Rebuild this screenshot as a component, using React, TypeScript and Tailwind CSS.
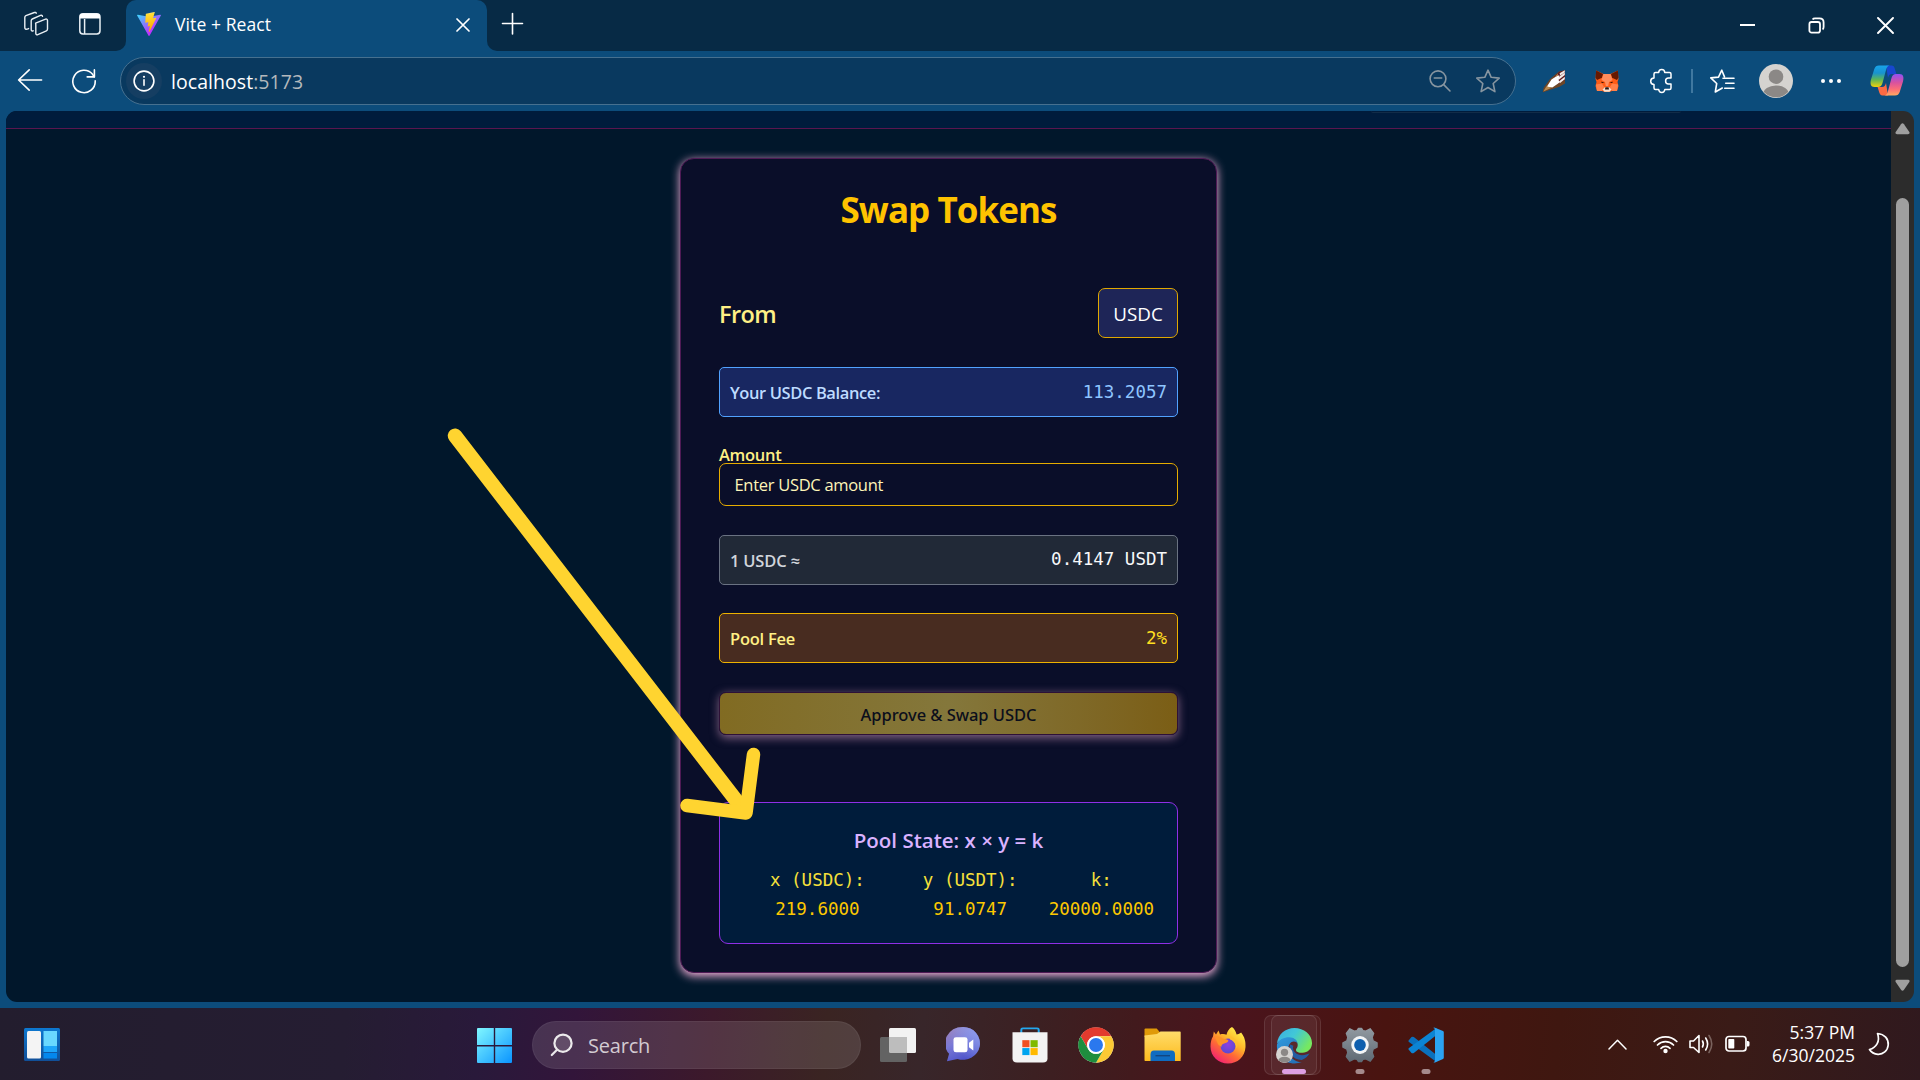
import type { ReactNode } from "react";

/* ---------- browser chrome icons ---------- */

function WorkspacesIcon() {
  return (
    <svg width="26" height="26" viewBox="0 0 26 26" fill="none" stroke="#e9eff4" strokeWidth="1.4" strokeLinejoin="round" strokeLinecap="round">
      <path d="M12.6 12.2 22.6 8.1a1.4 1.4 0 0 1 1.9 1.3v8.7c0 .8-.4 1.4-1.1 1.7l-8.6 3.900a1.4 1.4 0 0 1-2-1.300v-8.900c0-.6-.2-1.100-.2-1.300z" />
      <path d="M10.2 19.8c-1.6.7-2-.3-2-1.3V9.7c0-.8.4-1.4 1.1-1.7l8.2-3.6c1-.4 1.8 0 2 .9" />
      <path d="M5.6 17.6c-3 1.4-3.8.4-3.8-1V6.4c0-.8.4-1.400 1.100-1.700l8.500-3.200c1-.3 1.700 0 1.900.7" />
    </svg>
  );
}

function TabActionsIcon() {
  return (
    <svg width="24" height="24" viewBox="0 0 24 24" fill="none">
      <rect x="1.800" y="1.800" width="20.200" height="20.200" rx="3.200" stroke="#e9eff4" strokeWidth="1.500" />
      <path d="M1.800 6.500V4.500a2.700 2.700 0 0 1 2.700-2.700h14.800A2.700 2.700 0 0 1 22 4.500v2z" fill="#fff" />
      <path d="M6.600 7v15" stroke="#e9eff4" strokeWidth="1.500" />
    </svg>
  );
}

function ViteIcon() {
  return (
    <svg width="24" height="24" viewBox="0 0 256 257">
      <defs>
        <linearGradient id="viteA" x1="-.8%" x2="57.6%" y1="7.600%" y2="78.400%">
          <stop offset="0%" stopColor="#41D1FF" />
          <stop offset="100%" stopColor="#BD34FE" />
        </linearGradient>
        <linearGradient id="viteB" x1="43.400%" x2="50.300%" y1="2.200%" y2="89%">
          <stop offset="0%" stopColor="#FFEA83" />
          <stop offset="8.300%" stopColor="#FFDD35" />
          <stop offset="100%" stopColor="#FFA800" />
        </linearGradient>
      </defs>
      <path fill="url(#viteA)" d="M255.153 37.938L134.897 252.976c-2.483 4.440-8.862 4.466-11.382.048L.875 37.958c-2.746-4.814 1.371-10.646 6.827-9.670l120.385 21.517a6.537 6.537 0 0 0 2.322-.004l117.867-21.483c5.438-.991 9.574 4.796 6.877 9.620Z" />
      <path fill="url(#viteB)" d="M185.432.063L96.440 17.501a3.268 3.268 0 0 0-2.634 3.014l-5.474 92.456a3.268 3.268 0 0 0 3.997 3.378l24.777-5.718c2.318-.535 4.413 1.507 3.936 3.838l-7.361 36.047c-.495 2.426 1.782 4.500 4.151 3.780l15.304-4.649c2.372-.720 4.652 1.360 4.150 3.788l-11.698 56.621c-.732 3.542 3.979 5.473 5.943 2.437l1.313-2.028l72.516-144.720c1.215-2.423-.880-5.186-3.540-4.672l-25.505 4.922c-2.396.462-4.435-1.770-3.759-4.114l16.646-57.705c.677-2.350-1.370-4.583-3.769-4.113Z" />
    </svg>
  );
}

function CrossIcon({ size, stroke }: { size: number; stroke: number }) {
  return (
    <svg width={size} height={size} viewBox={`0 0 ${size} ${size}`} fill="none" stroke="#fff" strokeWidth={stroke} strokeLinecap="round">
      <path d={`M1 1 ${size - 1} ${size - 1}M${size - 1} 1 1 ${size - 1}`} />
    </svg>
  );
}

function BackIcon() {
  return (
    <svg width="26" height="24" viewBox="0 0 26 24" fill="none" stroke="#fff" strokeWidth="1.600" strokeLinecap="round" strokeLinejoin="round">
      <path d="M12.200 1.900 1.600 12l10.600 10.100M1.900 12H24.600" />
    </svg>
  );
}

function ReloadIcon() {
  return (
    <svg width="26" height="26" viewBox="0 0 26 26" fill="none" stroke="#fff" strokeWidth="1.600" strokeLinecap="round" strokeLinejoin="round">
      <path d="M24.200 12.900A11.200 11.200 0 1 1 21.600 6.300L23.200 8.900" />
      <path d="M23.400 1.900v7h-7.200" />
    </svg>
  );
}

function InfoIcon() {
  return (
    <svg width="24" height="24" viewBox="0 0 24 24" fill="none" stroke="#fff" strokeWidth="1.600">
      <circle cx="12" cy="12" r="9.900" />
      <path d="M12 10.700v5.600" strokeLinecap="round" />
      <circle cx="12" cy="7.800" r="1.100" fill="#fff" stroke="none" />
    </svg>
  );
}

function ZoomOutIcon() {
  return (
    <svg width="24" height="24" viewBox="0 0 24 24" fill="none" stroke="#8795a0" strokeWidth="1.600" strokeLinecap="round">
      <circle cx="10" cy="9.800" r="7.900" />
      <path d="M15.700 15.600 22 22M6.300 9h7.400" />
    </svg>
  );
}

function StarIcon() {
  return (
    <svg width="26" height="26" viewBox="0 0 26 26" fill="none" stroke="#8795a0" strokeWidth="1.600" strokeLinejoin="round">
      <path d="M13 2.200 16.200 9.300 24.200 10.100 18.200 15.500 19.900 23.600 13 19.500 6.100 23.600 7.800 15.500 1.800 10.100 9.800 9.300z" />
    </svg>
  );
}

function BrushIcon() {
  return (
    <svg width="24" height="24" viewBox="0 0 24 24">
      <path d="M23 1.200V14.600L17.500 17.800 5.500 21.800.8 23.200 1.500 19 8 10 17 2.600z" fill="#6e4627" />
      <path d="M23 1.200 17 2.900 12 8l4 7 7-4z" fill="#5f1a1f" />
      <path d="M17.600 4.200 22.800 1.300V3.300l-4.600 3.300zM15.800 8.700l7-5.200v2.400l-6.300 5zM16.800 12.600l6-4.900v2.600l-5 4z" fill="#f1ece9" />
      <path d="M15.500 6.500 9.500 10.500 4.800 17.800l5.500.8 7-4.900-.8-3.800 1-3.500z" fill="#fff" />
      <path d="m15.900 4.500-3.100 3.600 3.100-1.300zM4.500 17.300 1.300 22.600 9.700 18.800z" fill="#bb8b4f" />
    </svg>
  );
}

function FoxIcon() {
  return (
    <svg width="24" height="22" viewBox="0 0 24 22">
      <path d="M1.200.5 8.600 4h6.800L22.800.5l.7 8.500-1 3 1 4-1.500 5h-5l-2.500 1h-5L7 21H2L.5 16l1-4-1-3z" fill="#ff5c16" />
      <path d="M1.200.5 8 4 7 7.800 2 10 .5 7.500zM22.800.5 16 4l1 3.800 5 2.200 1.500-2.500z" fill="#661800" />
      <path d="M8.500 4h7l2 6-3.500 2-.8 4h-2.400l-.8-4-3.500-2z" fill="#ff8d5d" />
      <path d="M.9 14.500 7 13.500l2 3.500-2 4H2zM23.100 14.500 17 13.500 15 17l2 4h5z" fill="#ff8048" />
      <path d="M6.500 11.500 9.600 13H6.500zM17.500 11.500 14.400 13h3.100z" fill="#3a1206" />
      <path d="M7.500 19.500 10 17h4l2.500 2.500-2 2.300h-5z" fill="#f3e3d6" />
      <path d="M10.400 17.200h3.200l.4 2.300h-4z" fill="#2a1410" />
    </svg>
  );
}

function PuzzleIcon() {
  return (
    <svg width="26" height="26" viewBox="0 0 26 26" fill="none" stroke="#fff" strokeWidth="1.500" strokeLinejoin="round">
      <path d="M9.700 4.600C9.700 2.500 11 1.500 12.700 1.500S15.700 2.500 15.700 4.600H20.500Q22 4.600 22 6.100V10H19.500C17.500 10 16.600 11.200 16.600 13S17.500 16 19.500 16H22V20Q22 21.500 20.500 21.500H15.800C15.600 23.500 14.400 24.500 12.800 24.500S9.900 23.500 9.700 21.500H6.500Q5 21.500 5 20V16.500C3 16.400 1.700 15.200 1.700 13.200S3 10 5 9.900V6.100Q5 4.600 6.500 4.600z" />
    </svg>
  );
}

function FavoritesIcon() {
  return (
    <svg width="26" height="26" viewBox="0 0 26 26" fill="none" stroke="#fff" strokeWidth="1.600" strokeLinejoin="round" strokeLinecap="round">
      <path d="M15.500 8.900 12.800 2.200 9.500 9.100 1.800 9.900 7.700 15.500 6.300 24 13.300 20" />
      <path d="M14 10.200h11M16.700 15.200H25M15.700 20.200H25" />
    </svg>
  );
}

function AvatarIcon({ size }: { size: number }) {
  return (
    <svg width={size} height={size} viewBox="0 0 34 34">
      <defs>
        <clipPath id="avatarClip">
          <circle cx="17" cy="17" r="16.300" />
        </clipPath>
      </defs>
      <circle cx="17" cy="17" r="17" fill="#d5d3d0" />
      <g fill="#8b8886" clipPath="url(#avatarClip)">
        <circle cx="17" cy="12.700" r="7.300" />
        <ellipse cx="17" cy="30.600" rx="13" ry="9.200" />
      </g>
    </svg>
  );
}

function CopilotIcon() {
  return (
    <svg width="34" height="31" viewBox="0 0 34 31">
      <defs>
        <linearGradient id="cpA" x1="0" y1="0" x2="0" y2="1">
          <stop offset="0" stopColor="#18a4ea" />
          <stop offset=".35" stopColor="#1892cf" />
          <stop offset=".65" stopColor="#5cb559" />
          <stop offset="1" stopColor="#f2d20a" />
        </linearGradient>
        <linearGradient id="cpB" x1="0" y1="0" x2="0" y2="1">
          <stop offset="0" stopColor="#9050f4" />
          <stop offset=".4" stopColor="#d8529f" />
          <stop offset=".7" stopColor="#fb6c78" />
          <stop offset="1" stopColor="#ffaa62" />
        </linearGradient>
      </defs>
      <path d="M16 .5h5.500c2 0 2.700 1.200 3.300 3.200L26.400 9h-4.400c-2.500 0-3.200 1.500-4 4z" fill="#1747cf" />
      <path d="M18 30.500h-5.500c-2 0-2.700-1.200-3.300-3.200L7.600 22H12c2.500 0 3.200-1.500 4-4z" fill="#fb6a43" />
      <path d="M9 .5h10.500c-2 .5-2.800 2-3.500 4.500L12.500 18c-.8 2.700-2 4-4.500 4H4.500C.5 22 0 18.500 1 14.500L4.300 4C5.200 1.500 6.500.5 9 .5z" fill="url(#cpA)" />
      <path d="M25 30.500H14.500c2-.5 2.800-2 3.500-4.500L21.500 13c.8-2.700 2-4 4.500-4h3.500c4 0 4.500 3.500 3.500 7.500L29.700 27c-.9 2.500-2.200 3.500-4.700 3.500z" fill="url(#cpB)" />
    </svg>
  );
}

/* ---------- browser chrome ---------- */

function TabStrip() {
  return (
    <div className="flex h-[51px] bg-[#072a45] text-white">
      <div className="flex w-[126px] items-center gap-[29px] rounded-br-[10px] pl-[23px] pb-[3px]">
        <WorkspacesIcon />
        <TabActionsIcon />
      </div>
      <div className="relative flex h-[51px] w-[361px] items-center rounded-t-[10px] bg-[#0c4c7b] pb-[3px] pl-[11px] pr-[17px]">
        <div className="absolute -left-[10px] bottom-0 size-[10px] bg-[#0c4c7b]">
          <div className="size-full rounded-br-[10px] bg-[#072a45]" />
        </div>
        <div className="absolute -right-[10px] bottom-0 size-[10px] bg-[#0c4c7b]">
          <div className="size-full rounded-bl-[10px] bg-[#072a45]" />
        </div>
        <ViteIcon />
        <span className="ml-[14px] pb-px text-[17.5px] leading-6 tracking-[0.1px]">Vite + React</span>
        <div className="ml-auto mt-[2px]">
          <CrossIcon size={14} stroke={1.7} />
        </div>
      </div>
      <svg className="ml-[14px] mt-[12px]" width="23" height="23" viewBox="0 0 23 23" stroke="#fff" strokeWidth="1.600" strokeLinecap="round">
        <path d="M11.500 1.500v20.500M1.500 11.500h20" />
      </svg>
      <div className="ml-auto flex items-start pr-[26px] pt-[17px]">
        <div className="mr-[53px] mt-[7px] h-[2px] w-[15px] bg-white" />
        <svg className="mr-[52px]" width="17" height="17" viewBox="0 0 17 17" fill="none" stroke="#fff" strokeWidth="1.800">
          <rect x="1.400" y="5" width="10.600" height="10.600" rx="2.200" />
          <path d="M4.600 2.400Q5.300 1.400 7 1.400h4.500q4.100 0 4.100 4.100V10q0 1.700-1 2.400" />
        </svg>
        <CrossIcon size={17} stroke={1.9} />
      </div>
    </div>
  );
}

function Toolbar() {
  return (
    <div className="flex h-[60px] items-start bg-[#0c4c7b]">
      <div className="ml-[17px] mt-[17px]">
        <BackIcon />
      </div>
      <div className="ml-[28px] mt-[17px]">
        <ReloadIcon />
      </div>
      <div className="ml-[23px] mt-[6px] flex h-[48px] w-[1396px] items-center rounded-full border border-[#46708f] bg-[#09395f] pl-[5px] pr-[14px]">
        <div className="flex size-[36px] items-center justify-center rounded-full bg-[#153e62]">
          <InfoIcon />
        </div>
        <span className="ml-[9px] pt-px text-[19.500px] leading-6 tracking-[0.05px] text-white">
          localhost<span className="text-[#b3b8bc]">:5173</span>
        </span>
        <div className="ml-auto mr-[23px]">
          <ZoomOutIcon />
        </div>
        <StarIcon />
      </div>
      <div className="ml-[26px] mt-[18px]">
        <BrushIcon />
      </div>
      <div className="ml-[29px] mt-[19px]">
        <FoxIcon />
      </div>
      <div className="ml-[30px] mt-[17px]">
        <PuzzleIcon />
      </div>
      <div className="ml-[16px] mt-[18px] h-[24px] w-[2px] bg-[#4078a0]" />
      <div className="ml-[16px] mt-[17px]">
        <FavoritesIcon />
      </div>
      <div className="ml-[24px] mt-[13px]">
        <AvatarIcon size={34} />
      </div>
      <div className="ml-[28px] mt-[28px] flex gap-[4px]">
        <i className="size-[4px] rounded-full bg-white" />
        <i className="size-[4px] rounded-full bg-white" />
        <i className="size-[4px] rounded-full bg-white" />
      </div>
      <div className="ml-[29px] mt-[14px]">
        <CopilotIcon />
      </div>
    </div>
  );
}

function Scrollbar() {
  return (
    <div className="flex w-[23px] flex-col items-center bg-[#2c2c2c]">
      <svg className="mt-[12px]" width="15" height="12" viewBox="0 0 15 12">
        <path d="M6 1.200Q7.500-.6 9 1.200L14.300 9q.9 2.200-1.300 2.200H2Q-.2 11.200.7 9z" fill="#9f9f9f" />
      </svg>
      <div className="mt-[63px] w-[13px] flex-1 rounded-full bg-[#9f9f9f]" />
      <svg className="mb-[11px] mt-[12px]" width="15" height="12" viewBox="0 0 15 12">
        <path d="M6 10.800Q7.500 12.600 9 10.800L14.300 3q.9-2.200-1.300-2.200H2Q-.2.800.7 3z" fill="#9f9f9f" />
      </svg>
    </div>
  );
}

/* ---------- swap page ---------- */

function InfoRow({ label, value, box, labelClass, valueClass }: { label: string; value: string; box: string; labelClass: string; valueClass: string }) {
  return (
    <div className={`flex h-[50px] items-center justify-between rounded-[5px] border px-[10px] ${box}`}>
      <span className={`pt-[2px] text-[16.500px] font-semibold ${labelClass}`}>{label}</span>
      <span className={`font-['DejaVu_Sans_Mono',monospace] text-[17.500px] ${valueClass}`}>{value}</span>
    </div>
  );
}

function PoolColumn({ label, value }: { label: string; value: string }) {
  return (
    <div className="text-center leading-[29px]">
      <div className="text-[#f6e03a]">{label}</div>
      <div className="text-[#fcc800]">{value}</div>
    </div>
  );
}

function PoolState() {
  return (
    <div className="mt-[67px] h-[142px] rounded-[9px] border border-[#8f2fe6] bg-[#001c3b] pt-[24px]">
      <h3 className="text-center text-[20.500px] font-semibold leading-[26px] text-[#dab2ff]">Pool State: x × y = k</h3>
      <div className="ml-[50px] mt-[13px] flex font-['DejaVu_Sans_Mono',monospace] text-[17.500px]">
        <PoolColumn label="x (USDC):" value="219.6000" />
        <div className="w-[58px]" />
        <PoolColumn label="y (USDT):" value="91.0747" />
        <div className="w-[31px]" />
        <PoolColumn label="k:" value="20000.0000" />
      </div>
    </div>
  );
}

function SwapCard() {
  return (
    <div className="flex h-[815px] w-[537px] flex-col rounded-[14px] border border-[#4e1a55] bg-[#0a0e29] px-[38px] pt-[29px] shadow-[0_2.400px_9.600px_0_rgba(252,182,222,0.98)]">
      <h1 className="text-center text-[35px] font-bold leading-[43px] tracking-[-0.95px] text-[#ffc300]">Swap Tokens</h1>
      <div className="mt-[57px] flex items-center justify-between">
        <span className="pt-[3px] text-[23.500px] font-semibold tracking-[-0.6px] text-[#fff085]">From</span>
        <div className="flex h-[50px] w-[80px] items-center justify-center rounded-[7px] border border-[#e0a800] bg-[#1e2557] pt-[2px] text-[18.800px] text-white">USDC</div>
      </div>
      <div className="mt-[29px] flex flex-col">
        <InfoRow label="Your USDC Balance:" value="113.2057" box="border-[#51a2ff] bg-[#182761]" labelClass="text-[#bedbff] tracking-[-0.4px]" valueClass="text-[#8ec5ff] pt-px" />
        <label className="mt-[29px] h-[17px] text-[16.500px] font-semibold leading-[17px] tracking-[-0.3px] text-[#fff085]">Amount</label>
        <div className="mb-[29px] flex h-[43px] items-center rounded-[7px] border border-[#e6ac00] px-[14.500px] pt-[2px] text-[16.500px] tracking-[-0.3px] text-[#fef5b8]">Enter USDC amount</div>
        <InfoRow label="1 USDC ≈" value="0.4147 USDT" box="border-[#6a7282] bg-[#212937]" labelClass="text-[#d1d5dc] tracking-[-0.2px]" valueClass="text-[#f7f8fa] pb-px" />
        <div className="h-[28px]" />
        <InfoRow label="Pool Fee" value="2%" box="border-[#edb200] bg-[#482c20]" labelClass="text-[#fff085] tracking-[-0.25px]" valueClass="text-[#ffdf20]" />
      </div>
      <button className="mt-[29px] flex h-[43px] items-center justify-center rounded-[7px] border border-[#2e1137] bg-linear-to-r from-[#816b22] via-[#84773b] to-[#7b5e15] pt-[2px] font-['Noto_Sans',sans-serif] text-[16.500px] font-medium leading-6 tracking-[-0.05px] text-[#0b0e1c] shadow-[0_2.400px_9.600px_0_rgba(252,182,222,0.5)]">
        Approve &amp; Swap USDC
      </button>
      <PoolState />
    </div>
  );
}

function Page() {
  return (
    <div className="relative flex flex-1 flex-col items-center bg-[#01172b]">
      <div className="h-[18px] w-full border-b border-[#5a164f] bg-[#001c3c]" />
      <div className="absolute right-[210px] top-0 h-[2px] w-[310px] rounded-b-full border-b border-[#122c48]" />
      <div className="mt-[29px]">
        <SwapCard />
      </div>
    </div>
  );
}

/* Hand-drawn pointer laid over the page */
function PointerArrow() {
  return (
    <svg className="pointer-events-none absolute left-[440px] top-[420px]" width="340" height="410" viewBox="440 420 340 410" fill="none" stroke="#ffd430" strokeLinecap="round" strokeLinejoin="round">
      <path d="M455 435.700 742 808" strokeWidth="14.500" />
      <path d="M753.500 754.500 746 813 687 805.500" strokeWidth="13.500" />
    </svg>
  );
}

/* ---------- taskbar ---------- */

function WidgetsIcon() {
  return (
    <svg width="36" height="34" viewBox="0 0 36 34">
      <defs>
        <linearGradient id="wgA" x1="0" y1="0" x2="0" y2="1">
          <stop offset="0" stopColor="#0d78d0" />
          <stop offset="1" stopColor="#114f98" />
        </linearGradient>
      </defs>
      <rect width="36" height="33" rx="1.500" fill="url(#wgA)" />
      <rect x="3" y="3" width="14" height="27.500" rx="1.500" fill="#f4f4f4" />
      <rect x="19.500" y="3" width="13.500" height="15" fill="#69d8ff" />
      <rect x="19.500" y="18" width="13.500" height="6" fill="#1ea5fa" />
      <rect x="19.500" y="25" width="13.500" height="5.500" fill="#0487ee" />
    </svg>
  );
}

function StartIcon() {
  return (
    <svg width="35" height="35" viewBox="0 0 35 35">
      <defs>
        <linearGradient id="stA" x1="0" y1="0" x2="35" y2="35" gradientUnits="userSpaceOnUse">
          <stop offset="0" stopColor="#80f7ff" />
          <stop offset="1" stopColor="#0a94ff" />
        </linearGradient>
      </defs>
      <path fill="url(#stA)" d="M1 0h15.800v17H0V1a1 1 0 0 1 1-1zM18.200 0H34a1 1 0 0 1 1 1v16H18.200zM0 18.400h16.800V35H1a1 1 0 0 1-1-1zM18.200 18.400H35V34a1 1 0 0 1-1 1H18.200z" />
    </svg>
  );
}

function TaskViewIcon() {
  return (
    <svg width="36" height="35" viewBox="0 0 36 35">
      <rect x="9" y="0" width="27" height="25" rx="1.500" fill="#f2f2f2" />
      <rect x="0" y="9" width="27" height="25" rx="1.500" fill="#636363" />
      <path d="M9 9h18v16H10.500Q9 25 9 23.500z" fill="#bdbdbd" />
    </svg>
  );
}

function ChatIcon() {
  return (
    <svg width="36" height="36" viewBox="0 0 36 40" preserveAspectRatio="none">
      <defs>
        <linearGradient id="chA" x1=".1" y1="0" x2=".6" y2="1">
          <stop offset="0" stopColor="#a07cae" />
          <stop offset=".45" stopColor="#7b7ad6" />
          <stop offset="1" stopColor="#4a50c8" />
        </linearGradient>
        <linearGradient id="chB" x1="1" y1="0" x2=".3" y2=".6">
          <stop offset="0" stopColor="#8fa0f0" />
          <stop offset="1" stopColor="#8fa0f0" stopOpacity="0" />
        </linearGradient>
      </defs>
      <path d="M18 0a17.500 19 0 1 1-6 36.900L1 39.500 3.200 31A19 19 0 0 1 18 0z" fill="url(#chA)" transform="scale(.96)" />
      <path d="M18 0a17.500 19 0 1 1-6 36.900L1 39.500 3.200 31A19 19 0 0 1 18 0z" fill="url(#chB)" transform="scale(.96)" />
      <rect x="7.500" y="11.500" width="14" height="16.500" rx="2.500" fill="#fff" />
      <path d="M23 17.500 27.300 14v12L23 22.500z" fill="#fff" />
    </svg>
  );
}

function StoreIcon() {
  return (
    <svg width="36" height="36" viewBox="0 0 36 41" preserveAspectRatio="none">
      <path d="M9.300 8V3.200q0-1.500 1.500-1.500h14.400q1.500 0 1.500 1.500V8" fill="none" stroke="#23a8ee" strokeWidth="2" />
      <path d="M.5 6h35v30q0 4.500-4.500 4.500H5Q.5 40.500.5 36z" fill="#f3f3f3" />
      <path d="M10.300 15h7.200v8h-7.200z" fill="#f25022" />
      <path d="M18.500 15h7.200v8h-7.200z" fill="#7fba00" />
      <path d="M10.300 24h7.200v8h-7.200z" fill="#00a4ef" />
      <path d="M18.500 24h7.200v8h-7.200z" fill="#ffb900" />
    </svg>
  );
}

function ChromeIcon() {
  return (
    <svg width="36" height="36" viewBox="0 0 48 48">
      <circle cx="24" cy="24" r="23.500" fill="#fff" />
      <path d="M3.600 12.200A23.500 23.500 0 0 1 44.400 12.200H24A11.800 11.800 0 0 0 13.800 29.900z" fill="#e33b2e" />
      <path d="M44.400 12.200A23.500 23.500 0 0 1 24 47.500L34.200 29.900A11.800 11.800 0 0 0 24 12.200z" fill="#fcc934" />
      <path d="M24 47.500A23.500 23.500 0 0 1 3.600 12.200L13.800 29.900A11.800 11.800 0 0 0 34.200 29.900z" fill="#1e8e3e" />
      <circle cx="24" cy="24" r="11.800" fill="#fff" />
      <circle cx="24" cy="24" r="9.300" fill="#2a78ee" />
    </svg>
  );
}

function ExplorerIcon() {
  return (
    <svg width="37" height="34" viewBox="0 0 37 34">
      <defs>
        <linearGradient id="exA" x1="0" y1="0" x2="0" y2="1">
          <stop offset="0" stopColor="#ffdc6a" />
          <stop offset="1" stopColor="#fdbb1e" />
        </linearGradient>
      </defs>
      <path d="M1.500.5h11.200l3 3.500v5H.5V1.500q0-1 1-1z" fill="#e09a08" />
      <path d="M.5 7.500 13 6 16.500 3.500h19.500q.7 0 .7.700V33H1.200Q.5 33 .5 32.300z" fill="url(#exA)" />
      <path d="M6.500 33v-6.500q0-4 3.500-4h17.500q3.500 0 3.500 4V33z" fill="#0f6cc0" />
      <rect x="11.500" y="27" width="14.500" height="1.400" fill="#12467f" />
    </svg>
  );
}

function FirefoxIcon() {
  return (
    <svg width="36" height="37" viewBox="0 0 36 37">
      <defs>
        <linearGradient id="ffA" x1=".85" y1=".05" x2=".2" y2="1">
          <stop offset="0" stopColor="#fff44f" />
          <stop offset=".35" stopColor="#ffb92a" />
          <stop offset=".62" stopColor="#ff6a35" />
          <stop offset="1" stopColor="#f0187a" />
        </linearGradient>
        <radialGradient id="ffB" cx=".5" cy=".4" r=".6">
          <stop offset="0" stopColor="#8f3fe0" />
          <stop offset="1" stopColor="#5b4ad0" />
        </radialGradient>
      </defs>
      <path d="M22 0c2.500 2 4 4.600 4.600 7.500 3-.4 4.500-2 4.500-2 3.600 4.500 4.700 9 4.400 14.500C35 30 27.500 36.500 18 36.500S.500 29.500.500 19.500c0-4 1-8 2.500-10l.8-5L6 7.500 8.500 3.500 10 7.500c2.500-.8 5-.5 6.500.3.800-3.500 2.500-6.300 5.500-7.800z" fill="url(#ffA)" />
      <circle cx="18" cy="19" r="7.500" fill="url(#ffB)" />
      <path d="M5 10c3.500-1.500 6.500.2 8 1.800 2 .2 4.500.5 5.500 2-.8 1.800-3.300 2.300-5 3-1.400.6-2.200 1.500-2 3-1.500-.5-3.500-2.500-3.500-2.500z" fill="#ff9328" />
      <path d="M20 9.500c4 .5 7.500 4 7.500 8.500 0 1.500-.3 2.600-1 3.600-.3-4.500-3-7.600-6.500-9z" fill="#ffc02f" />
    </svg>
  );
}

function EdgeIcon() {
  return (
    <svg width="37" height="37" viewBox="0 0 38 38">
      <defs>
        <linearGradient id="egA" x1="0" y1="0" x2="1" y2=".5">
          <stop offset="0" stopColor="#2aa4e0" />
          <stop offset=".5" stopColor="#2fc3d4" />
          <stop offset="1" stopColor="#6ae652" />
        </linearGradient>
        <linearGradient id="egB" x1="0" y1="0" x2=".6" y2="1">
          <stop offset="0" stopColor="#1c92dc" />
          <stop offset="1" stopColor="#1166b4" />
        </linearGradient>
      </defs>
      <path d="M1 17C2 7.500 9.500 1 19 1s18 6.500 18 15.500c0 6-4.500 10-9.800 10-4 0-6.700-1.300-6.700-3 0-1.300 1.800-2 1.800-5.300 0-3.700-3.400-7-8.300-7C8.500 11.200 3.500 13.500 1 17z" fill="url(#egA)" />
      <path d="M1 18c2-5 7-7.500 12.500-7.500 5 0 8.700 3.200 8.700 7.300 0-1.500-1.800-2.800-4-2.800-3 0-5.700 3.500-5.700 8 0 7.500 6.500 13 14 13-2.500 1-5 1.500-7.500 1.500C8.500 37.500 0 29 1 18z" fill="url(#egB)" />
      <path d="M14.500 18c-3 7.500 2 15.500 12 16 3.500-1.500 6.500-4 8-7-4 2.200-11 3.200-15-.8-2-2-2.500-4.500-1.700-7z" fill="#0f4f99" />
    </svg>
  );
}

function SettingsIcon() {
  return (
    <svg width="36" height="36" viewBox="0 0 37 40" preserveAspectRatio="none">
      <defs>
        <linearGradient id="sgA" x1="0" y1="0" x2="0" y2="1">
          <stop offset="0" stopColor="#9199a0" />
          <stop offset="1" stopColor="#5f6a74" />
        </linearGradient>
      </defs>
      <path
        fill="url(#sgA)"
        stroke="url(#sgA)"
        strokeWidth="1.5"
        strokeLinejoin="round"
        d="M8 2 12.500 4.500 15.500 4 17 1.500h3L21.500 4l3 .5L29 2 32.500 7 31 11.500 32 15.500 36 17.500v5L32 24.500 31 28.500 32.500 33 29 38 24.500 35.500 21.500 36 20 38.500h-3L15.500 36 12.500 35.500 8 38 4.500 33 6 28.500 5 24.500 1 22.500v-5L5 15.500 6 11.500 4.500 7z"
      />
      <ellipse cx="18.500" cy="20" rx="9" ry="10" fill="#f3f5f6" />
      <ellipse cx="18.500" cy="20" rx="6" ry="6.700" fill="#0e5fae" />
    </svg>
  );
}

function VsCodeIcon() {
  return (
    <svg width="36" height="36" viewBox="0 0 36 41" preserveAspectRatio="none">
      <path d="M.8 15 3.500 11.500q1-1 2.300 0L28.500 32v8L1 17.200q-1.100-1-.2-2.200z" fill="#0a70bd" />
      <path d="M.8 26 3.500 29.500q1 1 2.300 0L28.500 9V1L1 23.800q-1.100 1-.2 2.200z" fill="#0c84d4" />
      <path d="M27 .8 35 4.500q.8.500.8 1.500v29q0 1-.8 1.500L27 40.300q-1.300.3-1.800-.3 1.800.2 1.800-2V3q0-2-1.800-2 .8-.8 1.800-.2z" fill="#2ba3f2" />
    </svg>
  );
}

function TaskItem({ children, running }: { children: ReactNode; running?: boolean }) {
  return (
    <div className="relative flex h-[72px] w-[66px] items-center justify-center pt-[2px]">
      {children}
      {running && <i className="absolute bottom-[6px] left-1/2 h-[5px] w-[9px] -translate-x-1/2 rounded-full bg-[#a58a8c]" />}
    </div>
  );
}

function Tray() {
  return (
    <div className="ml-auto flex h-[72px] items-center pr-[30px] text-white">
      <svg width="19" height="11" viewBox="0 0 19 11" fill="none" stroke="#fff" strokeWidth="1.500" strokeLinecap="round" strokeLinejoin="round">
        <path d="M1 10 9.500 1.300 18 10" />
      </svg>
      <svg className="ml-[26px]" width="25" height="20" viewBox="0 0 25 20" fill="none" stroke="#fff" strokeWidth="1.700" strokeLinecap="round">
        <path d="M1.200 7.500a16 16 0 0 1 22.600 0M4.500 11a11.300 11.300 0 0 1 16 0M8 14.300a6.400 6.400 0 0 1 9 0" />
        <circle cx="12.500" cy="17" r="2.200" fill="#fff" stroke="none" />
      </svg>
      <svg className="ml-[11px]" width="25" height="20" viewBox="0 0 25 20" fill="none" stroke="#fff" strokeWidth="1.600" strokeLinecap="round" strokeLinejoin="round">
        <path d="M1 7h3.500L10 1.500v17L4.500 13.500H1z" />
        <path d="M13.500 7q1.700 3 0 6M16.700 4q3.800 6 0 12" />
        <path d="M20 1.500q5.500 8.500 0 17" stroke="#7a625d" />
      </svg>
      <svg className="ml-[11px]" width="25" height="18" viewBox="0 0 25 18" fill="none">
        <rect x="1" y="1.500" width="20" height="14.500" rx="3" stroke="#fff" strokeWidth="1.700" />
        <rect x="3.300" y="4" width="6" height="9.500" rx=".8" fill="#fff" />
        <path d="M22 6h1q1.500 0 1.500 1.500V10q0 1.500-1.500 1.500h-1z" fill="#fff" />
      </svg>
      <div className="ml-[22px] text-right text-[17.500px] leading-[23px]">
        <div>5:37 PM</div>
        <div>6/30/2025</div>
      </div>
      <svg className="ml-[13px]" width="22" height="24" viewBox="0 0 22 24" fill="none" stroke="#fff" strokeWidth="1.700" strokeLinejoin="round">
        <path d="M9.500 1.500C16.500 2 20.700 7 20.200 13S15 22.500 10 22.300C6 22 3 20 1.500 17.500 8 16 12.500 9.500 9.500 1.500z" />
      </svg>
    </div>
  );
}

function Taskbar() {
  return (
    <div className="flex h-[72px] items-center bg-[linear-gradient(95deg,#231d2e_0%,#251d32_18%,#29193a_25%,#32153a_30%,#3c192b_37%,#3a2422_43%,#38262a_48%,#3c2022_54%,#421a1d_59%,#4a141d_64%,#491410_72%,#3f1710_81%,#3a1b17_90%,#30191e_100%)]">
      <div className="ml-[24px] w-[453px] pt-[2px]">
        <WidgetsIcon />
      </div>
      <div className="pt-[2px]">
        <StartIcon />
      </div>
      <div className="ml-[20px] mr-[4px] mt-[2px] flex h-[48px] w-[329px] items-center rounded-full border border-white/5 bg-white/12 pl-[17px] text-[20px] text-[#d3cbd2]">
        <svg width="23" height="24" viewBox="0 0 23 24" fill="#ffffff22" stroke="#eceaec" strokeWidth="2.200" strokeLinecap="round">
          <circle cx="13" cy="10.200" r="8.600" />
          <path d="M7 16.800 1.800 22" />
        </svg>
        <span className="ml-[15px] pt-px tracking-[-0.2px]">Search</span>
      </div>
      <TaskItem><TaskViewIcon /></TaskItem>
      <TaskItem><ChatIcon /></TaskItem>
      <TaskItem><StoreIcon /></TaskItem>
      <TaskItem><ChromeIcon /></TaskItem>
      <TaskItem><ExplorerIcon /></TaskItem>
      <TaskItem><FirefoxIcon /></TaskItem>
      <div className="relative flex h-[72px] w-[66px] items-center justify-center pt-[2px]">
        <div className="absolute left-[10px] top-[7px] h-[60px] w-[50px] rounded-[7px] border border-white/10 bg-white/4" />
        <div className="absolute left-[3px] top-[7px] h-[60px] w-[53px] rounded-[7px] border border-white/10 bg-white/5" />
        <EdgeIcon />
        <div className="absolute left-[15px] top-[38px]">
          <AvatarIcon size={17} />
        </div>
        <i className="absolute bottom-[6px] left-[21px] h-[5px] w-[24px] rounded-full bg-[#dd9fe3]" />
      </div>
      <TaskItem running><SettingsIcon /></TaskItem>
      <TaskItem running><VsCodeIcon /></TaskItem>
      <Tray />
    </div>
  );
}

export default function App() {
  return (
    <div className="relative flex h-[1080px] w-[1920px] flex-col overflow-hidden bg-[#0c4c7b] font-['Open_Sans','Noto_Sans',sans-serif]">
      <TabStrip />
      <Toolbar />
      <div className="mx-[6px] mb-[6px] flex flex-1 overflow-hidden rounded-[11px]">
        <Page />
        <Scrollbar />
      </div>
      <Taskbar />
      <PointerArrow />
    </div>
  );
}
